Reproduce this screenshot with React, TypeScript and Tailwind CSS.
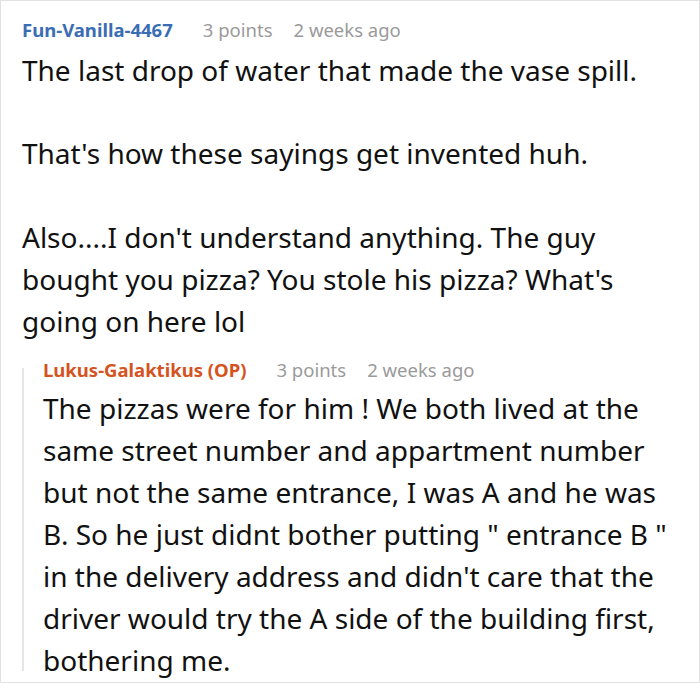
export default function App() {
  return (
    <div
      className="w-[700px] h-[683px] bg-white border border-[#e2e2e2] overflow-hidden"
      style={{ fontFamily: '"Noto Sans", "Open Sans", sans-serif' }}
    >
      <div className="pl-[21px] pr-2 pt-[17px]">
        {/* ── Parent comment ── */}
        <div className="flex items-center h-[24px] text-[18.5px] leading-[24px]">
          <span className="font-bold text-[#3b6db5]">Fun-Vanilla-4467</span>
          <span className="ml-[30px] text-[#9a9a9a]">3 points</span>
          <span className="ml-[21px] text-[#9a9a9a]">2 weeks ago</span>
        </div>
        <div className="mt-[7px] text-[28px] leading-[42px] text-[#111]">
          <p>The last drop of water that made the vase spill.</p>
          <p className="mt-[41px]">That's how these sayings get invented huh.</p>
          <p className="mt-[42px]">
            Also....I don't understand anything. The guy bought you pizza? You stole his pizza? What's going on here lol
          </p>
        </div>

        {/* ── Reply ── */}
        <div className="mt-[16px] flex">
          <div className="w-[2px] bg-[#e6e6e6] mt-[10px] mb-[10px]" />
          <div className="pl-[19px] w-[650px]">
            <div className="flex items-center h-[24px] text-[18.5px] leading-[24px]">
              <span className="font-bold text-[#d4531f]">Lukus-Galaktikus (OP)</span>
              <span className="ml-[30px] text-[#9a9a9a]">3 points</span>
              <span className="ml-[21px] text-[#9a9a9a]">2 weeks ago</span>
            </div>
            <p className="mt-[5px] text-[28px] leading-[42px] text-[#111]">
              The pizzas were for him ! We both lived at the same street number and appartment number but not the same entrance, I was A and he was B. So he just didnt bother putting " entrance B " in the delivery address and didn't care that the driver would try the A side of the building first, bothering me.
            </p>
          </div>
        </div>
      </div>
    </div>
  )
}
